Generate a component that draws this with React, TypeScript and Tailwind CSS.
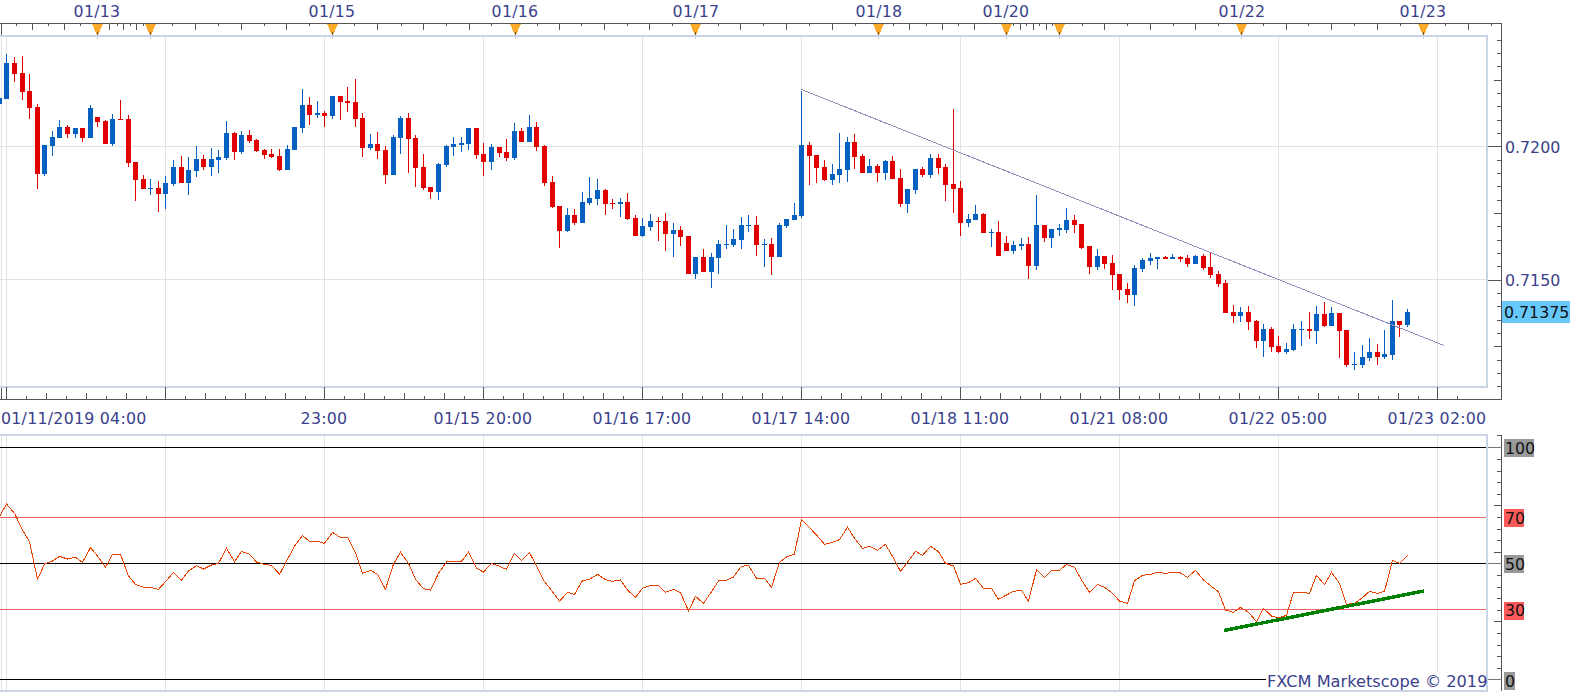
type C = [number, number, number, number, number];
// [colour 0 blue / 1 red, high, body top, body bottom, low], read at triple scale
const A: C[] = [
[0,294,294,312,312],[0,162,189,297,297],[1,171,189,222,246],[1,168,219,276,300],[1,222,273,324,357],[1,312,321,522,567],[0,435,435,522,528],[0,393,411,438,468],[0,360,381,414,414],[1,375,381,402,414],[0,384,384,402,414],[1,384,384,414,426],[0,315,324,414,414],[1,351,351,366,381],[1,360,363,432,432],[0,342,357,432,438],[1,300,357,360,360],[1,345,357,489,501],[1,486,486,540,603],[1,525,537,567,567],[0,537,564,567,585],[1,543,564,582,636],[0,528,549,582,627],[0,480,501,552,558],[1,468,501,549,549],[0,471,510,549,585],[0,438,477,513,531],[1,465,477,501,510],[0,444,477,501,528],[0,450,471,480,519],[0,363,399,474,480],[1,396,399,456,480],[0,393,405,456,462],[1,390,405,423,429],[1,417,420,453,456],[1,447,450,465,477],[1,447,462,471,474],[1,447,468,510,513],[0,435,447,510,510],[0,381,381,450,450],[0,267,315,384,399],[1,291,315,345,375],[0,303,339,345,354],[1,333,339,348,381],[0,288,288,348,357],[1,288,288,306,360],[1,261,303,309,336],[1,237,306,357,381],[1,339,354,444,471],[0,402,432,444,450],[1,396,432,453,477],[1,438,450,525,552],[0,405,411,525,525],[0,348,354,414,462],[1,339,354,417,519],[1,405,414,504,561],[1,462,501,564,570],[1,561,561,576,597],[0,489,492,576,600],[0,435,438,495,501],[0,411,432,441,468],[0,411,429,435,456],[0,384,384,432,450],[1,384,384,465,477],[1,429,462,486,528],[0,432,441,486,510],[1,441,441,459,471],[1,417,456,474,483],[0,369,393,474,480],[1,384,393,426,426],[0,345,381,426,426],
[1,366,381,441,453],[1,435,438,549,558],[1,528,546,621,624],[1,618,618,693,744],[0,624,645,693,696],[1,627,645,669,675],[0,576,606,669,669],[0,531,594,609,615],[0,537,570,597,615],[1,567,570,612,645],[1,597,609,612,627],[0,594,606,612,651],[1,579,606,657,660],[1,645,654,708,708],[0,654,678,708,711],[0,642,663,681,693],[1,651,663,666,723],[1,639,663,702,753],[0,669,690,702,771],[1,678,690,711,738],[1,708,708,822,822],[0,771,771,822,837],[1,747,771,816,816],[0,759,771,816,864],[0,720,732,774,822],[0,675,732,735,747],[0,687,717,735,741],[0,651,675,720,747],[0,645,675,678,696],[1,648,675,735,768],[0,717,732,735,801],[1,714,732,771,825],[0,669,675,771,771],[0,657,657,678,684],[0,609,645,660,660],[0,273,435,648,654],[1,426,435,468,555],[1,465,465,504,549],[1,480,501,540,543],[0,492,522,540,555],[0,399,507,525,549],[0,411,426,510,546],[1,402,426,471,507],[1,462,468,519,519],[0,477,498,519,519],[1,492,498,519,546],[0,480,483,519,540],[1,468,483,537,537],[1,507,534,612,621],[0,567,567,612,639],[0,507,507,570,582],[1,501,507,525,531],[0,462,474,525,534],[1,462,474,504,522],[1,492,501,555,603],[1,327,552,567,639],[1,543,564,669,708],[0,642,657,669,681],[0,615,642,660,660],[1,639,642,699,699],[0,687,696,699,741],[1,663,696,768,768],[1,708,729,753,753],[0,723,735,753,762],[0,714,732,738,750],[1,711,732,798,837],[0,585,675,798,810],[1,675,675,714,726],[0,687,687,714,744],[0,672,684,690,708],[0,624,660,690,700],[1,645,660,675,700],[1,672,672,743,746],
];
const B: C[] = [
[1,45,45,108,129],[0,54,75,108,117],[1,75,75,99,114],[1,72,96,132,177],[1,129,129,177,207],[1,156,174,192,216],[0,102,111,192,225],[0,81,87,114,123],[0,66,81,90,102],[0,78,78,84,114],[1,75,78,84,84],[0,69,78,84,84],[1,75,78,84,93],[1,72,81,99,108],[0,72,75,99,99],[1,69,75,111,117],[1,63,108,132,141],[1,120,129,159,168],[1,147,156,246,246],[1,222,243,255,276],[0,228,243,255,273],[1,225,243,273,297],[1,267,270,330,351],[0,279,294,330,378],[1,288,294,348,363],[1,315,345,363,366],[0,336,354,363,369],[0,279,294,357,360],[0,270,294,297,345],[1,243,294,300,324],[0,225,249,300,339],[1,213,249,285,288],[0,228,246,285,285],[1,246,246,300,381],[1,297,297,402,408],[0,363,399,402,417],[0,342,378,402,411],[0,321,363,381,390],[1,339,363,378,402],[0,297,369,378,384],[0,207,270,372,387],[1,270,270,282,318],[0,234,243,282,288],
];
const candles: C[] = [...A, ...B.map(c => [c[0], c[1] + 693, c[2] + 693, c[3] + 693, c[4] + 693] as C)];
const rsi = [110,72,100,150,185,298,252,243,229,237,232,247,203,228,262,223,223,288,313,322,322,328,305,277,301,273,257,267,255,250,205,245,214,223,246,253,256,283,238,199,167,184,184,190,157,172,172,218,280,271,283,328,252,217,250,298,326,330,280,246,244,244,217,265,276,250,259,268,220,241,218,258,305,335,364,337,343,302,298,283,299,304,300,330,352,325,316,316,337,328,338,393,349,370,335,303,301,291,259,256,295,295,322,247,231,222,118,143,165,193,187,179,142,175,205,199,211,193,229,274,247,214,226,199,215,250,258,313,308,295,325,325,358,345,334,331,364,269,292,272,271,253,262,300,337,313,322,340,363,370,302,286,283,277,280,277,279,292,271,300,317,335,390,397,382,397,425,385,408,414,406,337,337,340,286,314,277,310,373,370,353,334,340,334,241,250,226];
const cx = (i: number) => Math.round(6.4 + 7.571 * i);
const grid = Array.from({ length: 10 }, (_, k) => Math.round(6.4 + 159 * k));
const markers = [97.4, 150.4, 332.3, 514.5, 695.3, 877.5, 1006.3, 1059.4, 1241.3, 1422.5].map(Math.round);
const toX = (o: number, s: number[]) => s.map(v => Math.round(o + v / 2.958));
const longTop = [...toX(0,[96,190,322,364,403,578,714,847,1116,1252,1386]), ...toX(530,[87,220,353,622,758,892,1122,1218,1312,1449,1487,1525]), ...toX(1053,[152,288,421,690,823,957,1227])];
const shortTop = [...toX(0,[48,143,238,300,345,385,424,510,646,780,915,1048,1185,1320,1453]), ...toX(530,[20,152,288,421,555,690,825,960,1075,1170,1265,1430,1467,1506,1545]), ...toX(1053,[85,220,355,489,622,755,890,1025,1160,1295])];
const topLabels: [string, number][] = [["01/13",97],["01/15",332],["01/16",515],["01/17",696],["01/18",879],["01/20",1006],["01/22",1242],["01/23",1423]];
const timeLabels: [string, number][] = [["23:00",324],["01/15 20:00",483],["01/16 17:00",642],["01/17 14:00",801],["01/18 11:00",960],["01/21 08:00",1119],["01/22 05:00",1278],["01/23 02:00",1437]];
const AXIS = "#555555";
const GRID = "#e2e2e2";
const crisp = "block overflow-visible [shape-rendering:crispEdges]";
const labelClass = "fill-[#3a3f8c] text-[15.8px] tracking-[0.25px] [shape-rendering:auto]";
const darkClass = "fill-[#111111] text-[15.8px] [shape-rendering:auto]";

function TopAxis() {
  return (
    <svg width={1583} height={35} viewBox="0 0 1583 35" className={crisp}>
      {topLabels.map(([t, x]) => <text key={x} x={x} y={17} textAnchor="middle" className={labelClass}>{t}</text>)}
      <rect x={0} y={23} width={1502} height={1} fill={AXIS} />
      <rect x={1} y={23} width={1} height={12} fill={AXIS} />
      <rect x={1501} y={23} width={1} height={12} fill={AXIS} />
      {longTop.map(x => <rect key={`l${x}`} x={x} y={23} width={1} height={7} fill={AXIS} />)}
      {shortTop.map(x => <rect key={`s${x}`} x={x} y={23} width={1} height={3} fill={AXIS} />)}
      {markers.map(x => (
        <g key={x}>
          <polygon points={`${x - 5},24 ${x + 6},24 ${x + 1},35 ${x},35`} fill="#fba928" />
          <rect x={x} y={32} width={1} height={3} fill="#6b5a35" />
        </g>
      ))}
    </svg>
  );
}

function Grid({ y0, h }: { y0: number; h: number }) {
  return (
    <>
      <rect x={1} y={y0} width={1} height={h} fill={GRID} />
      {grid.map(x => <rect key={x} x={x} y={y0} width={1} height={h} fill={GRID} />)}
    </>
  );
}

function PricePlot() {
  return (
    <svg width={1486} height={349} viewBox="0 37 1486 349" className={crisp}>
      <Grid y0={37} h={349} />
      {markers.map(x => <rect key={x} x={x} y={37} width={1} height={2} fill="#c9d5e5" />)}
      <rect x={0} y={146} width={1486} height={1} fill={GRID} />
      <rect x={0} y={279} width={1486} height={1} fill={GRID} />
      {candles.map((c, n) => {
        const x = cx(n - 1);
        const col = c[0] ? "#e00000" : "#0461c1";
        const top = Math.round(c[2] / 3);
        const bot = Math.max(top + 1, Math.round(c[3] / 3));
        const hi = Math.round(c[1] / 3);
        const lo = Math.round(c[4] / 3);
        return (
          <g key={n} fill={col}>
            <rect x={x} y={hi} width={1} height={Math.max(1, lo - hi)} />
            <rect x={x - 2} y={top} width={5} height={bot - top} />
          </g>
        );
      })}
      <line x1={801.5} y1={89.5} x2={1444} y2={345.5} stroke="#8f8fbc" strokeWidth={1} />
    </svg>
  );
}

function PriceAxis() {
  const ticks = Array.from({ length: 27 }, (_, k) => k);
  return (
    <svg width={95} height={353} viewBox="1488 35 95 353" className={crisp}>
      <rect x={1501} y={35} width={1} height={365} fill={AXIS} />
      {ticks.map(k => {
        const y = Math.round(39.67 + 13.33 * k);
        const m = k % 10 === 8;
        const l = k % 5 === 3;
        return <rect key={k} x={m ? 1488 : l ? 1494 : 1497} y={y} width={m ? 14 : l ? 8 : 5} height={1} fill={AXIS} />;
      })}
      <text x={1505} y={153} className="fill-[#3a3f8c] text-[15.8px] [shape-rendering:auto]">0.7200</text>
      <text x={1505} y={286} className="fill-[#3a3f8c] text-[15.8px] [shape-rendering:auto]">0.7150</text>
      <rect x={1502} y={301} width={68} height={22} fill="#66c8fb" />
      <text x={1504} y={318} className={darkClass}>0.71375</text>
    </svg>
  );
}

function TimeAxis() {
  const t = Array.from({ length: 74 }, (_, k) => k);
  return (
    <svg width={1583} height={46} viewBox="0 388 1583 46" className={crisp}>
      <rect x={0} y={399} width={1502} height={1} fill={AXIS} />
      <rect x={1} y={388} width={1} height={11} fill={AXIS} />
      <rect x={1501} y={388} width={1} height={12} fill={AXIS} />
      {t.map(k => {
        const x = Math.round(6.4 + 19.875 * k);
        const h = k % 8 === 0 ? 12 : k % 2 === 0 ? 6 : 3;
        return <rect key={k} x={x} y={399 - h} width={1} height={h} fill={AXIS} />;
      })}
      <text x={1} y={424} className={labelClass}>01/11/2019 04:00</text>
      {timeLabels.map(([s, x]) => <text key={x} x={x} y={424} textAnchor="middle" className={labelClass}>{s}</text>)}
    </svg>
  );
}

function RsiPlot() {
  const pts = rsi.map((v, n) => `${cx(n - 1) + 0.5},${(v + 1440) / 3}`).join(" ");
  return (
    <svg width={1486} height={254} viewBox="0 436 1486 254" className={crisp}>
      <Grid y0={436} h={254} />
      <rect x={0} y={447} width={1486} height={1} fill="#000000" />
      <rect x={0} y={517} width={1486} height={1} fill="#f06464" />
      <rect x={0} y={563} width={1486} height={1} fill="#000000" />
      <rect x={0} y={609} width={1486} height={1} fill="#f06464" />
      <rect x={0} y={679} width={1486} height={1} fill="#000000" />
      <polyline points={pts} fill="none" stroke="#e64400" strokeWidth={1} />
      <line x1={1224} y1={630.5} x2={1424} y2={591} stroke="#008000" strokeWidth={3.5} />
      <rect x={1266} y={672} width={220} height={18} fill="#ffffff" />
      <text x={1267} y={687} className="fill-[#3a3f8c] text-[16.2px] [shape-rendering:auto]">FXCM Marketscope © 2019</text>
    </svg>
  );
}

function RsiAxis() {
  const vals = Array.from({ length: 21 }, (_, k) => k * 5);
  const box: [string, number, number, number, string, number][] = [
    ["100", 439, 30, 18, "#999999", 454],
    ["70", 509, 20, 18, "#ff5a5a", 524],
    ["50", 555, 20, 18, "#999999", 570],
    ["30", 602, 20, 18, "#ff5a5a", 616],
    ["0", 672, 11, 18, "#999999", 687],
  ];
  return (
    <svg width={95} height={258} viewBox="1488 434 95 258" className={crisp}>
      <rect x={1501} y={435} width={1} height={256} fill={AXIS} />
      {vals.map(v => {
        const y = Math.round(679.3 - 2.32 * v);
        const m = v === 0 || v === 50 || v === 100;
        const l = v === 75 || v === 55 || v === 25;
        return <rect key={v} x={m ? 1488 : l ? 1494 : 1497} y={y} width={m ? 14 : l ? 8 : 5} height={1} fill={m ? "#777777" : AXIS} />;
      })}
      <rect x={1497} y={435} width={5} height={1} fill={AXIS} />
      {box.map(([s, y, w, h, f, b]) => (
        <g key={s}>
          <rect x={1504} y={y} width={w} height={h} fill={f} />
          <text x={1505} y={b} className={darkClass}>{s}</text>
        </g>
      ))}
    </svg>
  );
}

export default function App() {
  return (
    <div className="w-[1583px] h-[693px] overflow-hidden bg-white font-['DejaVu_Sans',sans-serif]">
      <TopAxis />
      <div className="flex items-start">
        <div className="w-[1488px] border-y-2 border-r-2 border-[#c9d5e5]">
          <PricePlot />
        </div>
        <PriceAxis />
      </div>
      <TimeAxis />
      <div className="flex items-start">
        <div className="w-[1488px] border-y-2 border-r-2 border-[#c9d5e5]">
          <RsiPlot />
        </div>
        <RsiAxis />
      </div>
    </div>
  );
}
